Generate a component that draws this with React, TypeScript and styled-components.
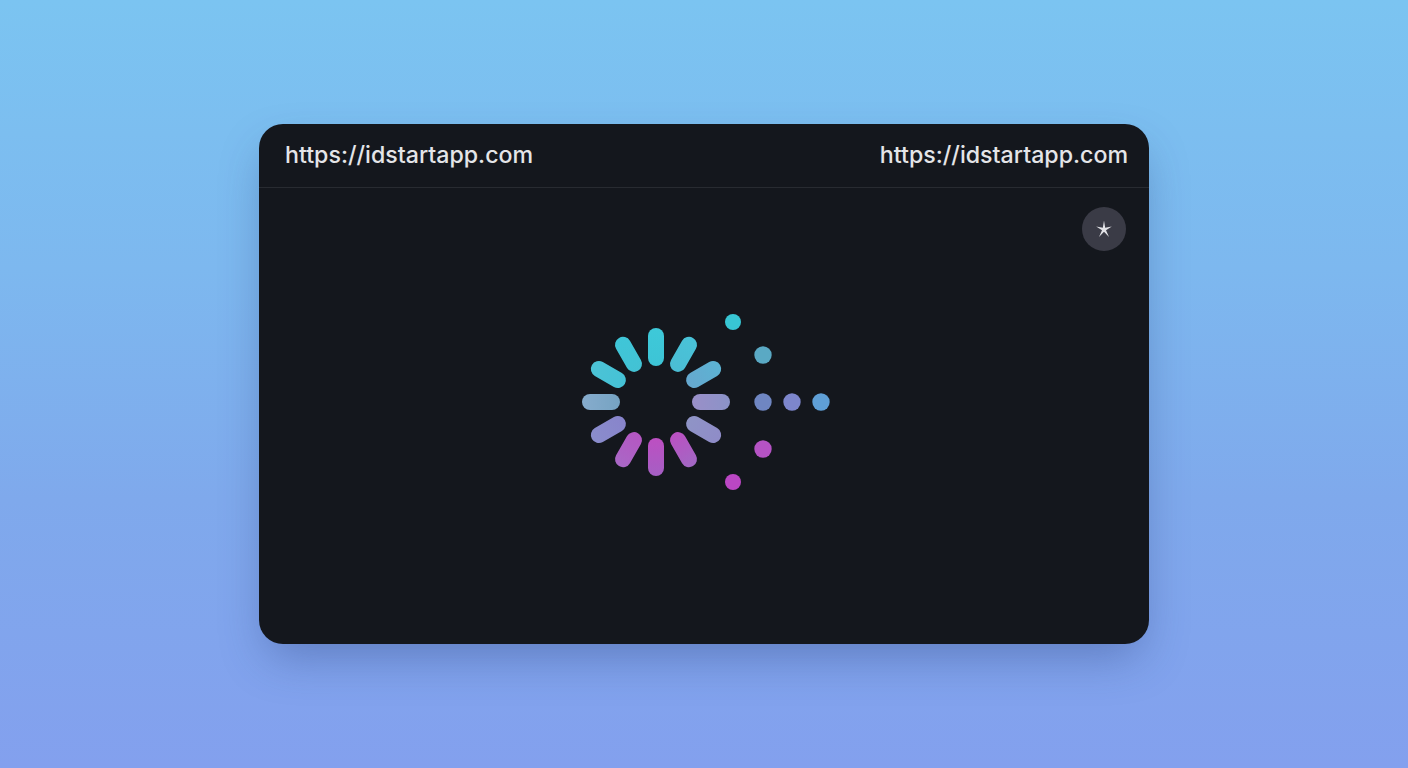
import React from 'react';
import styled, {createGlobalStyle} from 'styled-components';

const GlobalStyle = createGlobalStyle`
    html, body {
        margin: 0;
        padding: 0;
        height: 100%;
    }
    body {
        font-family: Inter, "Liberation Sans", sans-serif;
    }
`;

const Page = styled.div`
    width: 1408px;
    height: 768px;
    display: flex;
    align-items: center;
    justify-content: center;
    overflow: hidden;
    background: linear-gradient(180deg, #7bc4f1 0%, #7db8ef 35%, #7fa9ec 65%, #83a0ee 100%);
`;

const Card = styled.div`
    position: relative;
    width: 890px;
    height: 520px;
    display: flex;
    flex-direction: column;
    border-radius: 24px;
    background: #14171d;
    box-shadow: 0 20px 46px -8px rgba(40, 60, 120, 0.38);
    overflow: hidden;
`;

const Header = styled.header`
    height: 64px;
    flex-shrink: 0;
    display: flex;
    align-items: center;
    justify-content: space-between;
    padding: 0 21px 2px 26px;
    box-sizing: border-box;
    border-bottom: 1px solid #282b31;
`;

const Url = styled.span`
    font-size: 23.2px;
    font-weight: 450;
    color: #e4e5e8;
`;

const Body = styled.main`
    flex: 1;
    display: flex;
    align-items: center;
    justify-content: center;
    padding: 0 0 28px 4px;
`;

const SpinnerGraphic = styled.svg`
    filter: blur(0.4px);
`;

const StarButton = styled.button`
    position: absolute;
    top: 83px;
    right: 23px;
    width: 44px;
    height: 44px;
    padding: 0;
    border: 0;
    border-radius: 50%;
    background: #3a3b46;
    display: flex;
    align-items: center;
    justify-content: center;
`;

const bars = [
    {angle: 0, from: '#3ec9d9', to: '#3dc4d6'},
    {angle: 30, from: '#49c3d8', to: '#4bbdd4'},
    {angle: 60, from: '#5cb3d3', to: '#66a8cf'},
    {angle: 90, from: '#8b93c8', to: '#9a8fc8'},
    {angle: 120, from: '#8f8cc8', to: '#8f94c6'},
    {angle: 150, from: '#a268c4', to: '#bb50c2'},
    {angle: 180, from: '#a55fc4', to: '#bd4fc2'},
    {angle: 210, from: '#a968c6', to: '#b556c2'},
    {angle: 240, from: '#8a8dcc', to: '#8884cb'},
    {angle: 270, from: '#86accd', to: '#76a3c2'},
    {angle: 300, from: '#4cc3d6', to: '#45c2d6'},
    {angle: 330, from: '#3fc6d8', to: '#43c2d4'},
];

const dots = [
    {x: 153, y: 20, r: 8, color: '#38c6d4'},
    {x: 183, y: 53, r: 8.7, color: '#5aa9c4'},
    {x: 183, y: 100, r: 8.7, color: '#6f86c2'},
    {x: 212, y: 100, r: 8.7, color: '#7d86cc'},
    {x: 241, y: 100, r: 8.7, color: '#5f9fd6'},
    {x: 183, y: 147, r: 8.7, color: '#b553c4'},
    {x: 153, y: 180, r: 8, color: '#bb47c4'},
];

function Spinner() {
    return (
        <SpinnerGraphic
            width='252'
            height='200'
            viewBox='0 0 252 200'
        >
            <defs>
                {bars.map((bar) => (
                    <linearGradient
                        key={bar.angle}
                        id={`bar-${bar.angle}`}
                        x1='0'
                        y1='0'
                        x2='0'
                        y2='1'
                    >
                        <stop
                            offset='0'
                            stopColor={bar.from}
                        />
                        <stop
                            offset='1'
                            stopColor={bar.to}
                        />
                    </linearGradient>
                ))}
            </defs>
            {bars.map((bar) => (
                <rect
                    key={bar.angle}
                    x='68'
                    y='26'
                    width='16'
                    height='38'
                    rx='8'
                    fill={`url(#bar-${bar.angle})`}
                    transform={`rotate(${bar.angle} 76 100)`}
                />
            ))}
            {dots.map((dot) => (
                <circle
                    key={`${dot.x}-${dot.y}`}
                    cx={dot.x}
                    cy={dot.y}
                    r={dot.r}
                    fill={dot.color}
                />
            ))}
        </SpinnerGraphic>
    );
}

function StarIcon() {
    return (
        <svg
            width='18'
            height='18'
            viewBox='0 0 18 18'
            fill='#e2e2e6'
        >
            <path d='M9 0.5L10.2 7.8L16.8 6.6L11 10.2L14 17L9 11.8L4 17L7 10.2L1.2 6.6L7.8 7.8Z'/>
        </svg>
    );
}

export default function App() {
    return (
        <>
            <GlobalStyle/>
            <Page>
                <Card>
                    <Header>
                        <Url>{'https://idstartapp.com'}</Url>
                        <Url>{'https://idstartapp.com'}</Url>
                    </Header>
                    <StarButton aria-label='Favourite'>
                        <StarIcon/>
                    </StarButton>
                    <Body>
                        <Spinner/>
                    </Body>
                </Card>
            </Page>
        </>
    );
}
